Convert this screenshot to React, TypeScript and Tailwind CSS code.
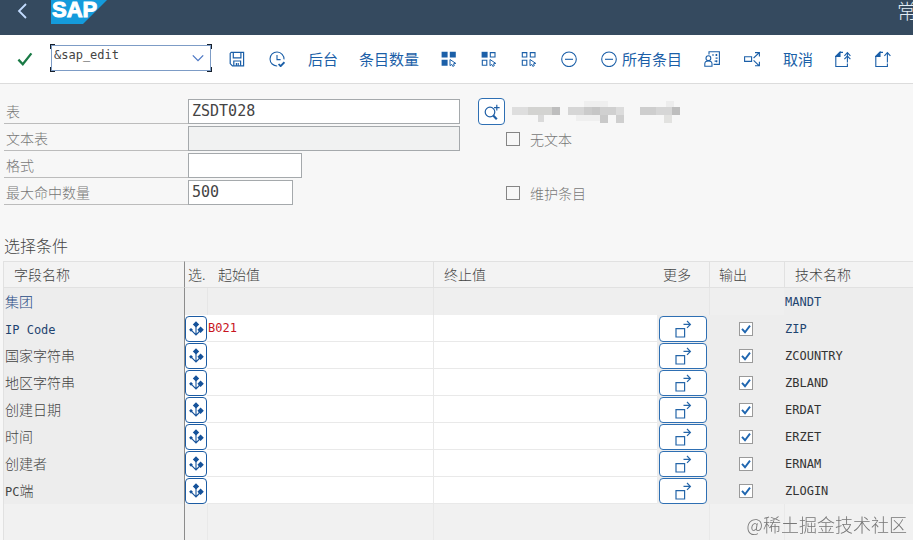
import React from 'react';

interface FieldRow {
  name: string;
  tech: string;
  key?: boolean;
  from?: string;
}

const rows: FieldRow[] = [
  { name: 'IP Code', tech: 'ZIP', key: true, from: 'B021' },
  { name: '国家字符串', tech: 'ZCOUNTRY' },
  { name: '地区字符串', tech: 'ZBLAND' },
  { name: '创建日期', tech: 'ERDAT' },
  { name: '时间', tech: 'ERZET' },
  { name: '创建者', tech: 'ERNAM' },
  { name: 'PC端', tech: 'ZLOGIN' },
];

const Icon: React.FC<{ children: React.ReactNode }> = ({ children }) => (
  <svg viewBox="0 0 16 16" className="w-4 h-4 shrink-0" fill="none" stroke="currentColor" strokeWidth="1.1">
    {children}
  </svg>
);

const Cursor = () => <path d="M9 8.5v6.2l1.8-1.3 1 2 1.5-.7-.8-1.9 2.3-.4z" strokeWidth="1" />;

const SaveIcon = () => (
  <Icon>
    <path d="M2.2 1.4h12.4v13.4H3.4l-2.2-2.2V2.4z" strokeWidth="1.2" />
    <path d="M4.3 1.4v5.4h7.6V1.4M4.8 14.8V10h6.8v4.8M7.4 12v2.8M9.2 12v2.8" strokeWidth="1.2" />
  </Icon>
);

const ClockIcon = () => (
  <Icon>
    <path d="M15 8.4A7 7 0 1 0 8.2 15M8 4v4.6h3.6" />
    <path d="M9.6 13l2 2.2 3.8-4" strokeWidth="1.8" />
  </Icon>
);

const SelectAllIcon = () => (
  <Icon>
    <path d="M.6.8h6v5.8h-6zM8.8.8h6v5.8h-6zM.6 8.8h6v6h-6z" fill="currentColor" stroke="none" />
    <Cursor />
  </Icon>
);

const SelectBlockIcon = () => (
  <Icon>
    <path d="M.6.8h6v5.8h-6z" fill="currentColor" stroke="none" />
    <path d="M9.3 1.6h4.7v4.4H9.3zM1.3 9.3h4.5v5H1.3z" />
    <Cursor />
  </Icon>
);

const DeselectIcon = () => (
  <Icon>
    <path d="M1.3 1.6h4.5V6H1.3zM9.3 1.6h4.7v4.4H9.3zM1.3 9.3h4.5v5H1.3z" />
    <Cursor />
  </Icon>
);

const MinusIcon = () => (
  <Icon>
    <circle cx="8" cy="8.3" r="7.3" />
    <path d="M4 8.3h8" />
  </Icon>
);

const RoleIcon = () => (
  <Icon>
    <path d="M5 3.4V.8h10.4v12.6H9.6" />
    <circle cx="4.4" cy="7.2" r="2.4" />
    <path d="M.8 15.2v-2.4c0-1.8 1.4-2.8 3.6-2.8s3.6 1 3.6 2.8v2.4z" />
    <path d="M8 4h2M11.4 4h2M11.6 7.2h2M10.6 10.2h2.8M12.4 3v2M12.6 9.2v2" strokeWidth="1.2" />
  </Icon>
);

const BranchIcon = () => (
  <Icon>
    <path d="M.6 5.8h7v4.6h-7zM9.6 7L15 1.8M9.6 9.4l5.4 5.2M11 1.6h4.4v4M11 14.8h4.4v-4" />
  </Icon>
);

const ExportIcon: React.FC<{ double?: boolean }> = ({ double }) => (
  <Icon>
    <path d="M.6 5.4L5 1v4.4z" fill="currentColor" />
    <path d="M5 1.4h3M.8 5v10.6h11.6v-3.2M12.4 2v9.4" />
    <path d="M9.4 4.8l3-3.2 3 3.2" />
    {double && <path d="M9.4 8.2l3-3.2 3 3.2" />}
  </Icon>
);

const SelectionIcon = () => (
  <svg viewBox="0 0 16 16" className="w-4 h-4" fill="none" stroke="currentColor" strokeWidth="1.1">
    <path d="M8 3v11M3 8.8l5 5.2 4.8-5" />
    <path d="M8 .2L11.2 3.4 8 6.6 4.8 3.4zM12.6 5.6l3.2 3.2-3.2 3.2-3.2-3.2zM3 6.9l1.9 1.9L3 10.7 1.1 8.8z" fill="currentColor" stroke="none" />
  </svg>
);

const MoreIcon = () => (
  <svg viewBox="0 0 18 18" className="w-[18px] h-[18px]" fill="none" stroke="currentColor" strokeWidth="1.2">
    <path d="M2 8.6h8.6V17H2zM9.5 4.4h6.6M13 1l3.4 3.4L13 7.8" />
  </svg>
);

const ToolButton: React.FC<{ label: string; children: React.ReactNode }> = ({ label, children }) => (
  <button type="button" aria-label={label} className="h-8 px-3 flex items-center shrink-0">
    {children}
  </button>
);

const TextButton: React.FC<{ children: React.ReactNode }> = ({ children }) => (
  <button type="button" className="h-8 pl-[11px] pr-[10px] shrink-0 whitespace-nowrap">{children}</button>
);

const FormRow: React.FC<{ id: string; label: string; children: React.ReactNode; extra?: React.ReactNode }> = ({ id, label, children, extra }) => (
  <div className="flex items-center h-[25px]">
    <label htmlFor={id} className="w-[184px] h-full pl-0.5 leading-6 border-b border-[#bcbcbc] text-[#777]">{label}</label>
    <div className="w-[272px] h-full flex">{children}</div>
    {extra}
  </div>
);

const FormCheck: React.FC<{ label: string }> = ({ label }) => (
  <label className="ml-[46px] flex items-center gap-[10px] leading-6 text-[#777]">
    <input type="checkbox" className="appearance-none w-[14px] h-[14px] border border-[#858585] bg-[#f7f7f7]" />
    {label}
  </label>
);

// redacted description next to the search help
const mosaic: [number, number, number, number, string][] = [
  [0, 8, 16, 8, '#dedede'], [16, 8, 24, 8, '#d3d3d1'], [40, 8, 8, 8, '#bebebe'], [26, 16, 6, 7, '#dadada'],
  [56, 8, 16, 8, '#d6d6d6'], [72, 8, 8, 8, '#cbcbcb'], [80, 8, 8, 8, '#c6c6c6'], [72, 2, 24, 6, '#efefef'],
  [88, 8, 16, 8, '#d0d0d0'], [88, 16, 8, 8, '#c9c9c9'], [104, 8, 8, 8, '#dcdcdc'], [104, 16, 8, 8, '#cfcfcf'], [64, 16, 24, 6, '#efefef'],
  [128, 8, 16, 8, '#cecece'], [144, 8, 16, 8, '#d6d6d6'], [160, 8, 8, 8, '#bebebe'], [152, 16, 8, 8, '#e2e2e0'], [154, 2, 8, 6, '#ededed'],
];

const inputStyle = "h-full px-[3px] pb-px border border-[#a5a9ac] rounded-none font-['DejaVu_Sans_Mono',monospace] text-[15px] text-[#444] outline-none";
const th = 'h-[26px] p-0 pb-px font-light text-left leading-6 whitespace-nowrap border-y border-[#e1e1e1]';
const mono = "font-['DejaVu_Sans_Mono','Noto_Sans_CJK_SC',monospace] text-[12px]";

const App: React.FC = () => {
  return (
    <div className="min-h-screen flex flex-col overflow-x-hidden bg-[#f7f7f7] font-['Noto_Sans_CJK_SC',sans-serif] text-[14px]">
      <header className="h-[35px] flex items-start bg-[#354a5f] overflow-hidden">
        <button type="button" aria-label="返回" className="w-[51px] h-[22px] pl-[17px] text-[#c3dcff]">
          <svg viewBox="0 0 12 22" className="w-3 h-[22px]" fill="none" stroke="currentColor" strokeWidth="1.8">
            <path d="M9 4L2 11l7 7" />
          </svg>
        </button>
        <svg viewBox="0 0 56 24" className="w-[56px] h-6" role="img" aria-label="SAP">
          <path d="M0 0h56L32 24H0z" fill="#149bdc" />
          <text x="1" y="17" fill="#fff" stroke="#fff" strokeWidth="1" fontFamily="Liberation Sans, sans-serif" fontWeight="700" fontSize="22">SAP</text>
        </svg>
        <h1 className="ml-auto w-4 shrink-0 whitespace-nowrap text-[20px] leading-[22px] font-light text-[#e4edf5]">常</h1>
      </header>

      <nav className="h-[49px] flex items-center bg-white border-b border-[#dcdcdc] text-[15px] text-[#1b5fa8]">
        <button type="button" aria-label="确认" className="w-[50px] h-8 pl-[17px] shrink-0 text-[#197a45]">
          <svg viewBox="0 0 16 16" className="w-4 h-4" fill="none" stroke="currentColor" strokeWidth="2.3">
            <path d="M1.4 8.6l4.4 4.6L14.4 2.4" />
          </svg>
        </button>
        <div className="relative w-[162px] h-[28px] mb-[2px] mr-[5px] p-px shrink-0">
          <div className="h-full flex border border-[#7d9cc6] text-[#4c77c4]">
            <input aria-label="命令" defaultValue="&sap_edit" className={`${mono} min-w-0 flex-1 pl-[2px] pb-[6px] text-[#444] outline-none`} />
            <button type="button" aria-label="历史" className="w-[18px] flex items-center">
              <svg viewBox="0 0 12 8" className="w-3 h-2" fill="none" stroke="currentColor" strokeWidth="1.3">
                <path d="M.8 1.4L6 6.6l5.2-5.2" />
              </svg>
            </button>
          </div>
          <span className="absolute left-0 top-0 w-[5px] h-[5px] border-l border-t border-[#17202b]" />
          <span className="absolute right-0 top-0 w-[5px] h-[5px] border-r border-t border-[#17202b]" />
          <span className="absolute left-0 bottom-0 w-[5px] h-[5px] border-l border-b border-[#17202b]" />
          <span className="absolute right-0 bottom-0 w-[5px] h-[5px] border-r border-b border-[#17202b]" />
        </div>
        <ToolButton label="保存"><SaveIcon /></ToolButton>
        <ToolButton label="执行"><ClockIcon /></ToolButton>
        <TextButton>后台</TextButton>
        <TextButton>条目数量</TextButton>
        <ToolButton label="全选"><SelectAllIcon /></ToolButton>
        <ToolButton label="选择块"><SelectBlockIcon /></ToolButton>
        <ToolButton label="取消全选"><DeselectIcon /></ToolButton>
        <ToolButton label="删除条目"><MinusIcon /></ToolButton>
        <button type="button" className="h-8 pl-3 pr-[10px] flex items-center gap-[5px] shrink-0 whitespace-nowrap">
          <MinusIcon />
          所有条目
        </button>
        <ToolButton label="用户"><RoleIcon /></ToolButton>
        <ToolButton label="分支"><BranchIcon /></ToolButton>
        <TextButton>取消</TextButton>
        <ToolButton label="全部导出"><ExportIcon double /></ToolButton>
        <ToolButton label="导出"><ExportIcon /></ToolButton>
      </nav>

      <main className="flex-1 flex flex-col">
        <form className="pl-1 pt-[15px] flex flex-col gap-[2px] font-light">
          <FormRow
            id="table"
            label="表"
            extra={
              <>
                <button type="button" aria-label="搜索" className="ml-[18px] w-[27px] h-[27px] shrink-0 flex items-center justify-center bg-white border border-[#2e6fb3] rounded-[4px] text-[#1f5fa6]">
                  <svg viewBox="0 0 16 16" className="w-4 h-4" fill="none" stroke="currentColor" strokeWidth="1.2">
                    <circle cx="6" cy="8" r="4.8" />
                    <path d="M9.2 11.4l3.6 3.8" strokeWidth="2.2" />
                    <path d="M12.8.8v5.6M10 3.6h5.6" />
                  </svg>
                </button>
                <svg viewBox="0 0 168 26" className="ml-[7px] w-[168px] h-[26px]" aria-hidden="true">
                  {mosaic.map(([x, y, w, h, c], i) => <rect key={i} x={x} y={y} width={w} height={h} fill={c} />)}
                </svg>
              </>
            }
          >
            <input id="table" defaultValue="ZSDT028" className={`${inputStyle} w-full bg-white`} />
          </FormRow>
          <FormRow id="text-table" label="文本表" extra={<FormCheck label="无文本" />}>
            <input id="text-table" readOnly className={`${inputStyle} w-full bg-[#f1f2f2]`} />
          </FormRow>
          <FormRow id="layout" label="格式">
            <input id="layout" className={`${inputStyle} w-[114px] bg-white`} />
          </FormRow>
          <FormRow id="max-hits" label="最大命中数量" extra={<FormCheck label="维护条目" />}>
            <input id="max-hits" defaultValue="500" className={`${inputStyle} w-[105px] bg-white`} />
          </FormRow>
        </form>

        <h2 className="mt-[28px] mb-1 pl-1 text-[16px] leading-6 font-light text-[#444]">选择条件</h2>

        <div className="flex-1 pl-[3px]">
          <table className="w-full table-fixed border-separate border-spacing-0 text-[#444] font-light">
            <colgroup>
              <col className="w-[181px]" />
              <col className="w-[23px]" />
              <col className="w-[226px]" />
              <col className="w-[224px]" />
              <col className="w-[52px]" />
              <col className="w-[75px]" />
              <col />
            </colgroup>
            <thead className="bg-[#f3f3f3]">
              <tr>
                <th className={`${th} pl-[10px] border-l`}>字段名称</th>
                <th className={`${th} pl-[3px] border-l border-l-[#8c8c8c]`}>选.</th>
                <th className={`${th} pl-[11px]`}>起始值</th>
                <th className={`${th} pl-[10px] border-l`}>终止值</th>
                <th className={`${th} pl-[6px]`}>更多</th>
                <th className={`${th} pl-[9px] border-l`}>输出</th>
                <th className={`${th} pl-[10px] border-l`}>技术名称</th>
              </tr>
            </thead>
            <tbody>
              <tr className="bg-[#efefef]">
                <td className="h-[27px] p-0 pl-px border-l border-[#e1e1e1] bg-[#ededed] text-[#1f4a85]">集团</td>
                <td className="p-0 border-l border-[#8c8c8c]" />
                <td className="p-0 border-l border-[#e6e6e6]" />
                <td className="p-0 border-l border-[#e6e6e6]" />
                <td className="p-0" />
                <td className="p-0 border-l border-[#e6e6e6]" />
                <td className={`${mono} p-0 pl-px font-normal bg-[#ededed] text-[#1f4470]`}>MANDT</td>
              </tr>
              {rows.map((row) => (
                <tr key={row.tech} className="bg-[#ededed]">
                  <td className={`h-[27px] p-0 pl-px border-l border-[#e1e1e1] whitespace-nowrap ${row.key ? 'text-[#1f4470]' : ''}`}>
                    {row.key ? <span className={`${mono} font-normal`}>{row.name}</span> : row.name === 'PC端' ? <><span className={`${mono} font-normal`}>PC</span>端</> : row.name}
                  </td>
                  <td className="p-0 border-l border-[#8c8c8c] bg-white">
                    <button type="button" aria-label={`${row.name} 选项`} className="w-[22px] h-[26px] flex items-center justify-center bg-white border border-[#1b5ba3] rounded-[4px] text-[#15529a]">
                      <SelectionIcon />
                    </button>
                  </td>
                  <td className="p-0 bg-white border-b border-[#e9e9e9]">
                    <input aria-label={`${row.name} 起始值`} defaultValue={row.from} className={`${mono} block w-full h-[26px] pl-px font-normal text-[#c8141e] outline-none`} />
                  </td>
                  <td className="p-0 bg-white border-b border-l border-[#e9e9e9]">
                    <input aria-label={`${row.name} 终止值`} className={`${mono} block w-full h-[26px] font-normal outline-none`} />
                  </td>
                  <td className="p-0 pl-[2px]">
                    <button type="button" aria-label={`${row.name} 更多`} className="w-12 h-[26px] flex items-center justify-center bg-white border border-[#2e6fb3] rounded-[4px] text-[#2465a8]">
                      <MoreIcon />
                    </button>
                  </td>
                  <td className="p-0 pr-[2px]">
                    <div className="relative w-[14px] h-[14px] mx-auto">
                      <input type="checkbox" defaultChecked aria-label={`${row.name} 输出`} className="peer appearance-none block w-[14px] h-[14px] bg-white border border-[#9a9a9a]" />
                      <svg viewBox="0 0 14 14" className="absolute inset-0 pointer-events-none hidden peer-checked:block text-[#1f66b0]" fill="none" stroke="currentColor" strokeWidth="1.9">
                        <path d="M3 6.8l3 3.4 5-6.6" />
                      </svg>
                    </div>
                  </td>
                  <td className={`${mono} p-0 pl-px font-normal ${row.key ? 'text-[#1f4470]' : 'text-[#333]'}`}>{row.tech}</td>
                </tr>
              ))}
              <tr className="bg-[#f1f1f1]">
                <td className="h-9 p-0 border-l border-[#e1e1e1]" />
                <td className="p-0 border-l border-[#8c8c8c]" />
                <td className="p-0 border-l border-[#e9e9e9]" />
                <td className="p-0 border-l border-[#e9e9e9]" />
                <td className="p-0" />
                <td className="p-0 border-l border-[#e9e9e9]" />
                <td className="p-0 border-l border-[#e9e9e9]" />
              </tr>
            </tbody>
          </table>
        </div>
      </main>

      <div className="fixed right-[6px] bottom-1 text-[18px] leading-6 font-light text-[#777] pointer-events-none">@稀土掘金技术社区</div>
    </div>
  );
};

export default App;
